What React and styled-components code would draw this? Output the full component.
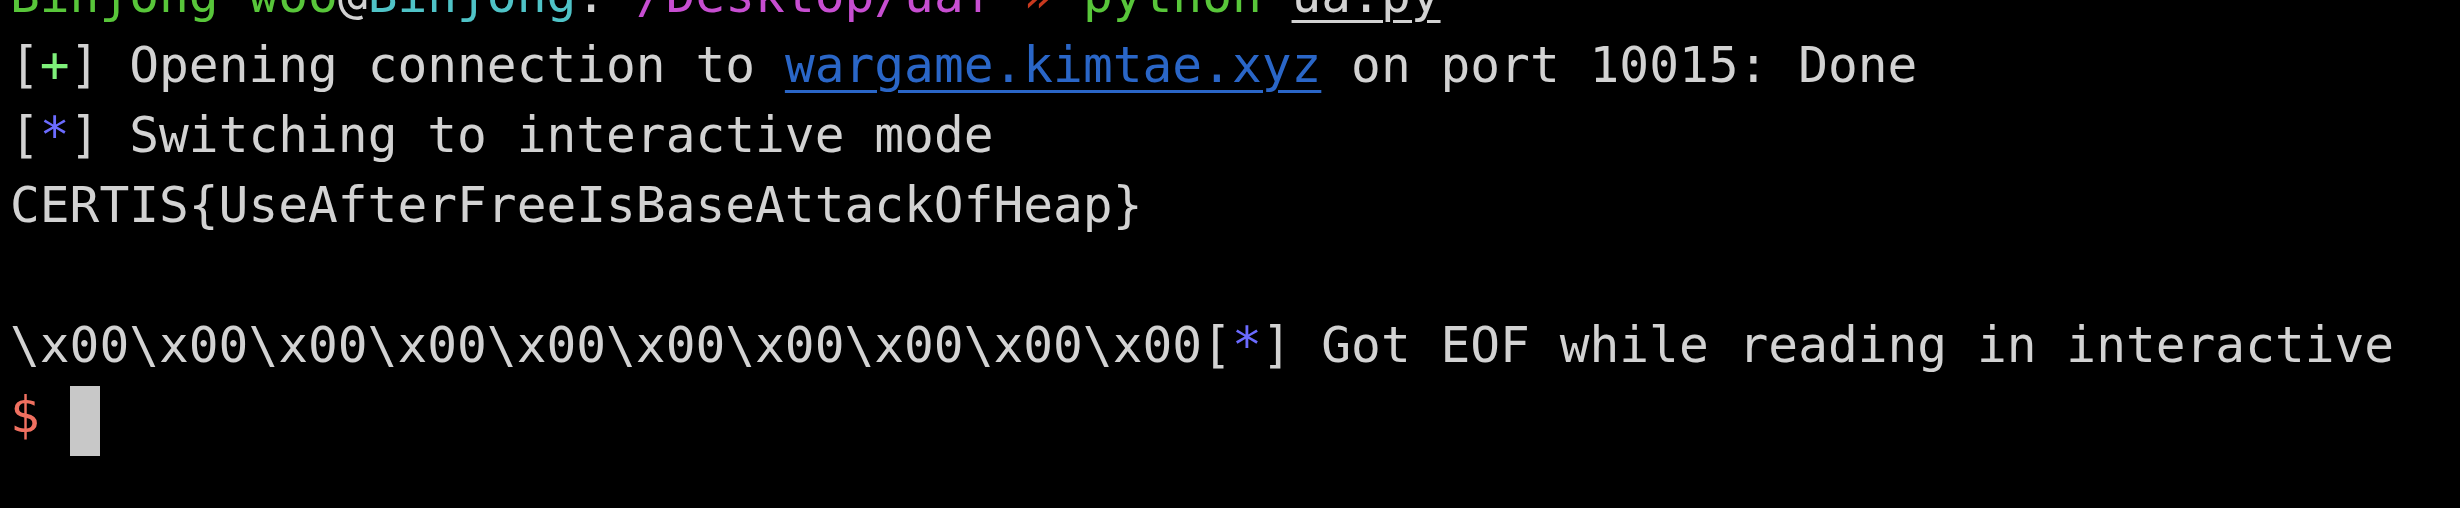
import React from "react";
import styled, { createGlobalStyle } from "styled-components";

const Global = createGlobalStyle`
  html, body {
    margin: 0;
    padding: 0;
    background: #000;
    overflow: hidden;
  }
`;

const Terminal = styled.div`
  width: 2460px;
  height: 508px;
  background: #000;
  overflow: hidden;
  font-family: "DejaVu Sans Mono", "Liberation Mono", monospace;
  font-size: 49.5px;
  color: #d2d2d2;
`;

const Screen = styled.div`
  margin-top: -34px;
  padding-left: 10px;
  display: flex;
  flex-direction: column;
`;

const Line = styled.div`
  height: 70px;
  line-height: 58px;
  white-space: pre;
`;

const colors = {
  user: "#58c63a",
  host: "#4fc3c7",
  path: "#c74ed1",
  arrow: "#c8391e",
  cmd: "#58c63a",
  plus: "#7ef07a",
  star: "#6b6bff",
  prompt: "#f07060",
  plain: "#d2d2d2",
};

const Seg = styled.span`
  color: ${(p) => colors[p.$c] || colors.plain};
  text-decoration: ${(p) => (p.$u ? "underline" : "none")};
  text-decoration-thickness: 3px;
  text-underline-offset: 8px;
`;

const Link = styled.span`
  color: #2a66c7;
  text-decoration: underline;
  text-decoration-thickness: 3px;
  text-underline-offset: 8px;
`;

const Cursor = styled.span`
  display: inline-block;
  vertical-align: top;
  width: 30px;
  height: 70px;
  background: #c8c8c8;
`;

const Tag = ({ sym, c }) => (
  <>
    [<Seg $c={c}>{sym}</Seg>]
  </>
);

export default function App() {
  return (
    <Terminal>
      <Global />
      <Screen>
        <Line>
          <Seg $c="user">Binjong-woo</Seg>
          <Seg>@</Seg>
          <Seg $c="host">Binjong</Seg>
          <Seg>:</Seg>
          <Seg $c="path">~/Desktop/uaf</Seg>
          <Seg> </Seg>
          <Seg $c="arrow">»</Seg>
          <Seg $c="cmd"> python </Seg>
          <Seg $u>ua.py</Seg>
        </Line>
        <Line>
          <Tag sym="+" c="plus" />
          {" Opening connection to "}
          <Link>wargame.kimtae.xyz</Link>
          {" on port 10015: Done"}
        </Line>
        <Line>
          <Tag sym="*" c="star" />
          {" Switching to interactive mode"}
        </Line>
        <Line>{"CERTIS{UseAfterFreeIsBaseAttackOfHeap}"}</Line>
        <Line />
        <Line>
          {"\\x00".repeat(10)}
          <Tag sym="*" c="star" />
          {" Got EOF while reading in interactive"}
        </Line>
        <Line>
          <Seg $c="prompt">$</Seg>
          {" "}
          <Cursor />
        </Line>
      </Screen>
    </Terminal>
  );
}
